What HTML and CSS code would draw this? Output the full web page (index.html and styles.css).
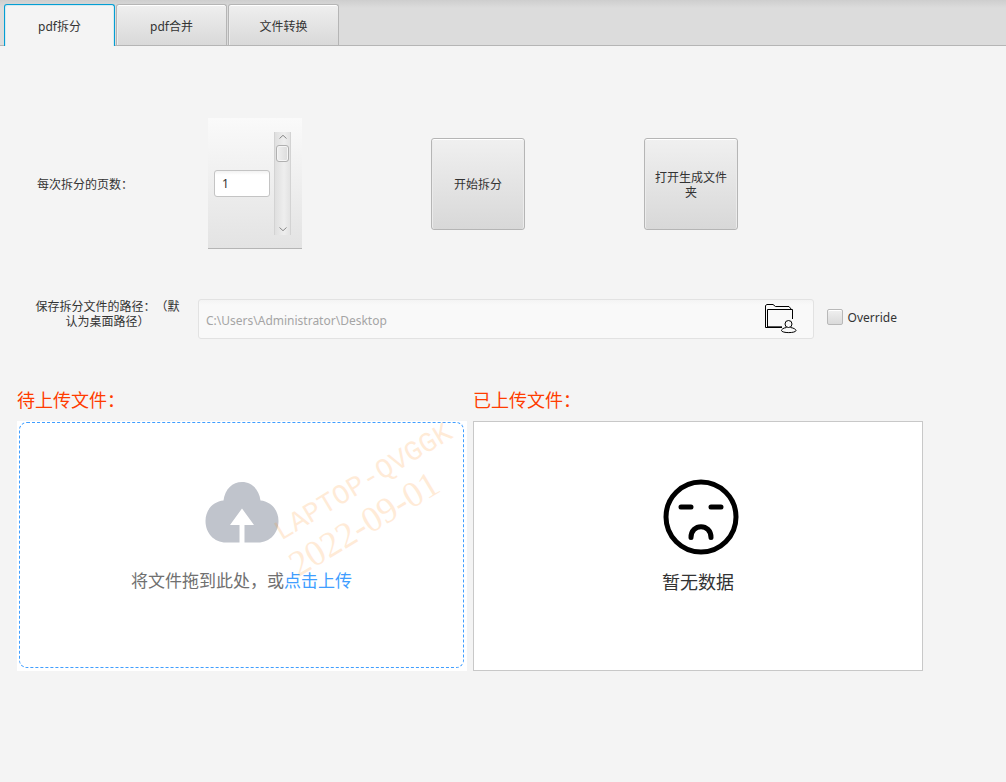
FILE: index.html
```html
<!DOCTYPE html>
<html lang="zh-CN">
<head>
<meta charset="utf-8">
<meta name="viewport" content="width=device-width, initial-scale=1">
<title>pdf拆分</title>
<link rel="stylesheet" href="styles.css">
</head>
<body>
<nav class="tabs" role="tablist">
  <button class="tab tab-active" type="button" role="tab" aria-selected="true">pdf拆分</button>
  <button class="tab" type="button" role="tab">pdf合并</button>
  <button class="tab" type="button" role="tab">文件转换</button>
</nav>
<main class="content">
  <section class="actions">
    <label class="pages-label" for="pages">每次拆分的页数：</label>
    <div class="stepper">
      <input class="pages" id="pages" type="text" value="1">
      <div class="scrollbar">
        <button class="arrow" type="button" aria-label="减少"><svg width="8" height="5" viewBox="0 0 8 5"><path d="M.5 4.500 4 1.300 7.500 4.500"/></svg></button>
        <button class="thumb" type="button" aria-label="滑块"></button>
        <button class="arrow arrow-down" type="button" aria-label="增加"><svg width="8" height="5" viewBox="0 0 8 5"><path d="M.5.5 4 3.700 7.500.5"/></svg></button>
      </div>
    </div>
    <button class="button start" type="button">开始拆分</button>
    <button class="button open" type="button">打开生成文件夹</button>
  </section>
  <section class="path-row">
    <label class="path-label" for="path">保存拆分文件的路径：（默认为桌面路径）</label>
    <div class="path-field">
      <input class="path" id="path" type="text" placeholder="C:\Users\Administrator\Desktop">
      <button class="browse" type="button" aria-label="选择文件夹">
        <svg width="32" height="30" viewBox="0 0 32 30"><g fill="none" stroke="#000" stroke-width="1"><path d="M3.500 23.500H.5V1.500L2 .5H8L10.500 2.500H24L26.500 5.500"/><path d="M17 23.500H2.500V5.500H27.500V15"/><path d="M3 22.500H17" stroke="#555"/><circle cx="23.500" cy="20" r="3.500"/><path d="M21.500 23.500C18 24 16.500 25.500 16.500 26.500C16.500 29.300 31 29.300 31 26.500C31 25.500 29 24 25.500 23.500"/></g></svg>
      </button>
    </div>
    <label class="override"><input class="check" type="checkbox">Override</label>
  </section>
  <section class="panels">
    <div class="panel">
      <h2 class="heading">待上传文件：</h2>
      <div class="upload">
        <div class="dropzone">
          <svg class="cloud" width="74" height="62" viewBox="0 0 74 62"><path fill="#c0c4cc" d="M18.500 18.500C20 7 27.500 0 37 0S54 7 55.500 18.500C66 19.500 73.500 28 73.500 39C73.500 51 65 60.500 53 60.500H39.500V43H49L37 26.500 25 43H34.500V60.500H21C9 60.500.5 51 .5 39C.5 28 8 19.500 18.500 18.500Z"/></svg>
          <p class="hint">将文件拖到此处，或<a class="link" href="#">点击上传</a></p>
        </div>
        <svg class="watermark" viewBox="0 0 450 250" aria-hidden="true"><g transform="translate(264 120) rotate(-31)"><text class="host" x="0" y="0">LAPTOP-QVGGK</text><text class="date" x="-4" y="40">2022-09-01</text></g></svg>
      </div>
    </div>
    <div class="panel">
      <h2 class="heading">已上传文件：</h2>
      <div class="uploaded">
        <svg class="face" width="76" height="76" viewBox="0 0 76 76" fill="none" stroke="#000" stroke-width="5" stroke-linecap="round"><circle cx="38" cy="38" r="35"/><path d="M18 28H28M48 28H58M28 58.500C28 44 48 44 48 58.500"/></svg>
        <p class="empty">暂无数据</p>
      </div>
    </div>
  </section>
</main>
</body>
</html>
```

FILE: styles.css
```css
* { box-sizing: border-box; }
body {
  margin: 0;
  background: #f4f4f4;
  color: #333;
  font: 12px/15px "Noto Sans", "Noto Sans CJK SC", sans-serif;
  text-spacing-trim: space-all;
}
button, input { font: inherit; color: inherit; }
button { padding: 0; }
.tabs {
  display: flex;
  gap: 1px;
  height: 46px;
  padding: 4px 4px 0;
  background: linear-gradient(#cecece, #dcdcdc 8px);
  border-bottom: 1px solid #b5b5b5;
}
.tab {
  width: 111px;
  height: 41px;
  padding-top: 2px;
  border: 1px solid #b5b5b5;
  border-bottom: 0;
  border-radius: 3px 3px 0 0;
  background: linear-gradient(#efefef, #d9d9d9);
  box-shadow: inset 0 1px #fff, inset 1px 0 #ececec;
}
.tab-active {
  height: 42px;
  border-color: #039ed3;
  background: #f4f4f4;
  box-shadow: inset 1px 1px #d5eaf1, inset -1px 0 #d5eaf1;
}
.actions {
  display: flex;
  align-items: center;
  padding: 72px 37px 0;
}
.pages-label { width: 171px; padding-top: 2px; }
.stepper {
  display: flex;
  align-items: center;
  justify-content: space-between;
  width: 94px;
  height: 131px;
  padding: 0 11px 0 6px;
  background: linear-gradient(#fafafa, #e3e3e3);
  border-bottom: 1px solid #b5b5b5;
}
.pages {
  width: 56px;
  height: 27px;
  padding: 0 7px;
  border: 1px solid #c4c4c4;
  border-radius: 3px;
  background: linear-gradient(#f2f2f2, #fff 4px);
}
.scrollbar {
  display: flex;
  flex-direction: column;
  align-items: center;
  width: 17px;
  height: 103px;
  border: solid #d3d3d3;
  border-width: 0 1px;
  background: linear-gradient(90deg, #dfdfdf, #eee 60%, #e3e3e3);
}
.arrow {
  display: grid;
  place-items: center;
  height: 10px;
  border: 0;
  background: none;
}
.arrow svg { fill: none; stroke: #888; }
.arrow-down { margin-top: auto; }
.thumb {
  width: 13px;
  height: 17px;
  margin-top: 3px;
  border: 1px solid #b0b0b0;
  border-radius: 3px;
  background: linear-gradient(90deg, #f0f0f0, #dcdcdc);
  box-shadow: inset 0 0 0 1px #f5f5f5;
}
.button {
  width: 94px;
  height: 92px;
  padding: 2px 8px 0;
  border: 1px solid #b5b5b5;
  border-radius: 3px;
  background: linear-gradient(#f0f0f0, #d8d8d8);
  box-shadow: inset 0 1px #fff, inset 1px 0 #ebebeb, inset -1px 0 #ebebeb;
}
.start { margin-left: 129px; }
.open { margin-left: 119px; }
.path-row {
  display: flex;
  align-items: center;
  padding: 50px 109px 0 35px;
}
.path-label {
  flex: none;
  width: 145px;
  margin: 0 18px 10px 0;
  text-align: center;
}
.path-field {
  display: flex;
  align-items: center;
  flex: 1;
  height: 40px;
  padding: 0 16px 0 7px;
  border: 1px solid #e2e2e2;
  border-radius: 3px;
  background: linear-gradient(#f4f4f4, #f9f9f9 5px);
}
.path {
  flex: 1;
  min-width: 0;
  padding: 2px 0 0;
  border: 0;
  outline: 0;
  background: none;
}
.path::placeholder { color: #a5a5a5; opacity: 1; }
.browse { display: flex; border: 0; background: none; }
.override {
  display: flex;
  align-items: center;
  gap: 5px;
  margin: 0 0 4px 13px;
}
.check {
  appearance: none;
  width: 16px;
  height: 16px;
  margin: 0;
  border: 1px solid #b8b8b8;
  border-radius: 2px;
  background: linear-gradient(#f0f0f0, #dadada);
  box-shadow: inset 0 1px #fff;
}
.check:checked { background: #039ed3; }
.panels {
  display: grid;
  grid-template-columns: 1fr 1fr;
  gap: 6px;
  padding: 50px 83px 0 17px;
}
.heading {
  margin: 0 0 9px;
  color: #ff3c00;
  font-size: 18px;
  font-weight: 400;
  line-height: 23px;
}
.upload {
  position: relative;
  height: 250px;
  padding: 1px 3px 3px 2px;
  background: #fff;
}
.dropzone, .uploaded {
  display: flex;
  flex-direction: column;
  align-items: center;
  height: 100%;
}
.dropzone {
  padding-top: 59px;
  border: 1px dashed #409eff;
  border-radius: 8px;
}
.hint, .empty { margin: 0; font-size: 18px; line-height: 24px; }
.hint { margin-top: 25px; color: #707070; font-size: 17px; }
.link { color: #409eff; text-decoration: none; }
.watermark {
  position: absolute;
  inset: 0;
  width: 100%;
  height: 100%;
  fill: #ff8c1a;
  opacity: .17;
  pointer-events: none;
}
.host { font: 28px "Liberation Mono", monospace; }
.date { font: 36px "Liberation Serif", serif; }
.uploaded {
  height: 250px;
  padding-top: 57px;
  border: 1px solid #c8c8c8;
  background: #fff;
}
.face { margin-left: 5px; }
.empty { margin-top: 15px; }
```
